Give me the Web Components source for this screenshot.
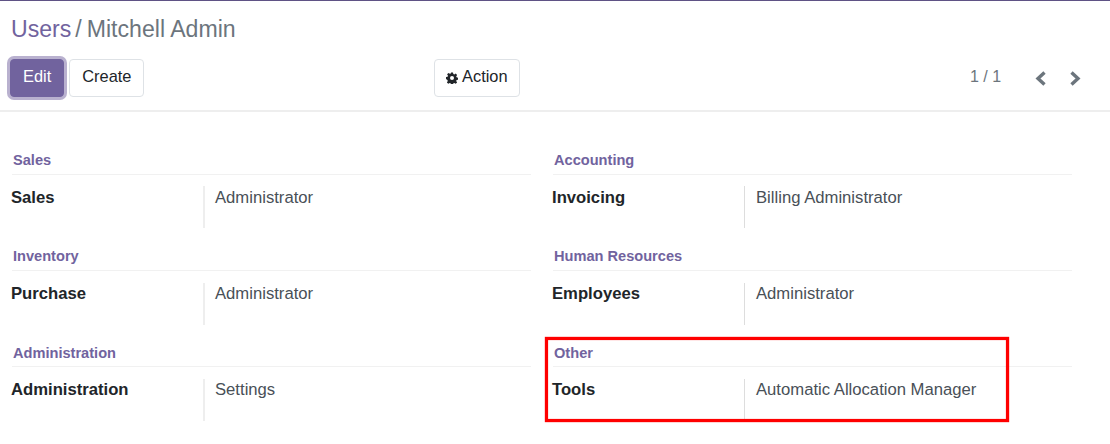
<!DOCTYPE html>
<html>
<head>
<meta charset="utf-8">
<style>
html,body{margin:0;padding:0;background:#fff;}
body{width:1110px;height:444px;overflow:hidden;font-family:"Liberation Sans",Arial,sans-serif;color:#212529;}
</style>
</head>
<body>
<users-form></users-form>

<template id="btn-tmpl">
<style>
:host{display:inline-flex;box-sizing:border-box;height:38px;align-items:center;justify-content:center;padding:0 12px 3px;border:1px solid #dee2e6;border-radius:4px;background:#fff;color:#212529;font-size:16.4px;}
:host([primary]){background:#71639e;border-color:#71639e;color:#fff;box-shadow:0 0 0 3px #b9b1cf;}
:host([tight]){padding-right:11px;}
</style>
<slot></slot>
</template>

<template id="bar-tmpl">
<style>
:host{display:block;border-top:1px solid #5f5285;border-bottom:2px solid #eeeeee;height:109px;box-sizing:content-box;}
.crumb{padding:14px 0 0 11px;height:29px;line-height:29px;font-size:23.1px;color:#6c757d;}
.crumb a{color:#71639e;}
.crumb i{font-style:normal;padding:0 5px 0 4px;}
.tools{display:grid;grid-template-columns:434px 526px 1fr;margin-top:15px;}
.left{display:flex;gap:5px;padding-left:10px;}
.mid{display:flex;}
.pager{display:flex;align-items:center;font-size:16px;color:#6c757d;height:38px;padding:0 0 3px 10px;box-sizing:border-box;}
.pager span{width:65px;}
.pager svg{display:block;margin:4px 24px 0 0;}
.gear{margin:3px 4px 0 -1px;}
</style>
<div class="crumb"><a>Users</a><i>/</i>Mitchell Admin</div>
<div class="tools">
  <div class="left"><ui-btn primary>Edit</ui-btn><ui-btn>Create</ui-btn></div>
  <div class="mid"><ui-btn tight>
    <svg class="gear" width="12" height="12" viewBox="0 0 24 24" fill="#212529"><path fill-rule="evenodd" d="M10 1h4l.7 3.2 1.900.8 2.800-1.800 2.800 2.800-1.800 2.800.8 1.900 3.200.7v4l-3.200.7-.8 1.900 1.800 2.800-2.800 2.800-2.800-1.800-1.900.8-.7 3.200h-4l-.7-3.200-1.900-.8-2.800 1.800-2.800-2.800 1.800-2.800-.8-1.900L0 14v-4l3.200-.7.8-1.900L2.200 4.600 5 1.800l2.800 1.800 1.900-.8zM12 8a4 4 0 1 0 0 8 4 4 0 0 0 0-8z"/></svg>Action</ui-btn></div>
  <div class="pager"><span>1 / 1</span>
    <svg width="11" height="15" viewBox="0 0 11 15"><path d="M9.500 1.500 3 7.500l6.500 6" fill="none" stroke="#6c757d" stroke-width="3.400"/></svg>
    <svg width="11" height="15" viewBox="0 0 11 15"><path d="M1.500 1.500 8 7.500l-6.500 6" fill="none" stroke="#6c757d" stroke-width="3.400"/></svg>
  </div>
</div>
</template>

<template id="group-tmpl">
<style>
:host{display:block;position:relative;height:96.33px;}
h3{margin:0;padding:.2px 0 0 1px;font-size:14.6px;line-height:16px;font-weight:700;color:#71639e;height:21.8px;border-bottom:1px solid #f1f1f1;box-sizing:content-box;}
.row{display:grid;grid-template-columns:191px 1fr;margin-top:11.4px;font-size:16.67px;}
.label{font-weight:700;color:#212529;line-height:22px;margin-left:-1px;padding-top:.35px;}
.val{border-left:1px solid #dddddd;box-sizing:border-box;height:42px;padding:.35px 0 0 11px;color:#495057;line-height:22px;}
:host([wide]) .val{border-left:2px solid #eeeeee;padding-left:10px;}
</style>
<h3><slot name="head"></slot></h3>
<div class="row"><div class="label"><slot name="label"></slot></div><div class="val"><slot name="val"></slot></div></div>
<slot name="mark"></slot>
</template>

<template id="mark-tmpl">
<style>
:host{display:block;position:absolute;left:-8px;top:-7.47px;width:464px;height:85px;box-sizing:border-box;border:3px solid #ff0000;box-shadow:0 0 1px #ff0000,inset 0 0 1px #ff0000;pointer-events:none;}
</style>
</template>

<template id="form-tmpl">
<style>
:host{display:block;}
.sheet{display:grid;grid-template-columns:519px 519px;column-gap:22px;padding:39.8px 0 0 12px;}
</style>
<form-bar></form-bar>
<div class="sheet">
  <form-group wide><span slot="head">Sales</span><span slot="label">Sales</span><span slot="val">Administrator</span></form-group>
  <form-group><span slot="head">Accounting</span><span slot="label">Invoicing</span><span slot="val">Billing Administrator</span></form-group>
  <form-group wide><span slot="head">Inventory</span><span slot="label">Purchase</span><span slot="val">Administrator</span></form-group>
  <form-group><span slot="head">Human Resources</span><span slot="label">Employees</span><span slot="val">Administrator</span></form-group>
  <form-group wide><span slot="head">Administration</span><span slot="label">Administration</span><span slot="val">Settings</span></form-group>
  <form-group><span slot="head">Other</span><span slot="label">Tools</span><span slot="val">Automatic Allocation Manager</span><red-mark slot="mark"></red-mark></form-group>
</div>
</template>

<script>
function reg(name, tmplId) {
  customElements.define(name, class extends HTMLElement {
    constructor() {
      super();
      this.attachShadow({mode: 'open'}).appendChild(document.getElementById(tmplId).content.cloneNode(true));
    }
  });
}
reg('ui-btn', 'btn-tmpl');
reg('form-bar', 'bar-tmpl');
reg('form-group', 'group-tmpl');
reg('red-mark', 'mark-tmpl');
reg('users-form', 'form-tmpl');
</script>
</body>
</html>
